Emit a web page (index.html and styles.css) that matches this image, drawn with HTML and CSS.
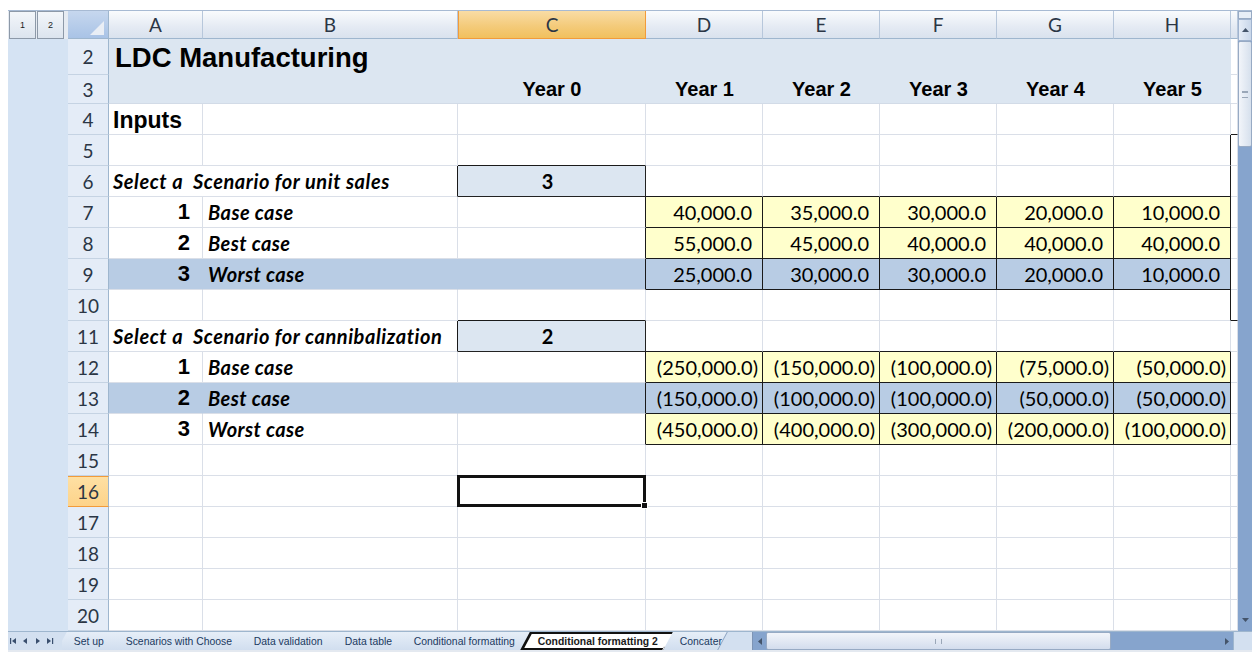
FILE: index.html
```html
<!DOCTYPE html>
<html lang="en">
<head>
<meta charset="utf-8">
<title>LDC Manufacturing - Conditional formatting 2</title>
<link rel="stylesheet" href="styles.css">
</head>
<body>
<div class="app">
  <div class="main">
    <aside class="outline">
      <div class="levels"><span class="lvl">1</span><span class="lvl">2</span></div>
    </aside>

    <section class="sheet">
      <div class="row hdr">
        <div class="corner"><svg width="41" height="29" viewBox="0 0 41 29"><polygon points="36,10 36,24 22,24" fill="#e9eef5"/></svg></div>
        <div class="ch">A</div>
        <div class="ch">B</div>
        <div class="ch active">C</div>
        <div class="ch">D</div>
        <div class="ch">E</div>
        <div class="ch">F</div>
        <div class="ch">G</div>
        <div class="ch">H</div>
        <div class="ch"></div>
      </div>

      <div class="row r2">
        <div class="rh">2</div>
        <div class="c band title span8">LDC Manufacturing</div>
        <div class="c"></div>
      </div>

      <div class="row r3">
        <div class="rh">3</div>
        <div class="c band span2"></div>
        <div class="c band year">Year 0</div>
        <div class="c band year">Year 1</div>
        <div class="c band year">Year 2</div>
        <div class="c band year">Year 3</div>
        <div class="c band year">Year 4</div>
        <div class="c band year">Year 5</div>
        <div class="c"></div>
      </div>

      <div class="row">
        <div class="rh">4</div>
        <div class="c heading">Inputs</div>
        <div class="c"></div><div class="c"></div>
        <div class="c"></div><div class="c"></div><div class="c"></div><div class="c"></div><div class="c"></div>
        <div class="c bb"></div>
      </div>

      <div class="row">
        <div class="rh">5</div>
        <div class="c"></div><div class="c"></div><div class="c bb"></div>
        <div class="c"></div><div class="c"></div><div class="c"></div><div class="c"></div><div class="c br"></div>
        <div class="c"></div>
      </div>

      <div class="row">
        <div class="rh">6</div>
        <div class="c span2 label br">Select a&nbsp; Scenario for unit sales</div>
        <div class="c pick">3</div>
        <div class="c bb"></div><div class="c bb"></div><div class="c bb"></div><div class="c bb"></div><div class="c bb br"></div>
        <div class="c"></div>
      </div>

      <div class="row">
        <div class="rh">7</div>
        <div class="c num">1</div><div class="c case">Base case</div><div class="c br"></div>
        <div class="c v">40,000.0</div><div class="c v">35,000.0</div><div class="c v">30,000.0</div><div class="c v">20,000.0</div><div class="c v">10,000.0</div>
        <div class="c"></div>
      </div>

      <div class="row">
        <div class="rh">8</div>
        <div class="c num">2</div><div class="c case">Best case</div><div class="c br"></div>
        <div class="c v">55,000.0</div><div class="c v">45,000.0</div><div class="c v">40,000.0</div><div class="c v">40,000.0</div><div class="c v">40,000.0</div>
        <div class="c"></div>
      </div>

      <div class="row">
        <div class="rh">9</div>
        <div class="c num hl">3</div><div class="c case hl">Worst case</div><div class="c hl br"></div>
        <div class="c v on">25,000.0</div><div class="c v on">30,000.0</div><div class="c v on">30,000.0</div><div class="c v on">20,000.0</div><div class="c v on">10,000.0</div>
        <div class="c"></div>
      </div>

      <div class="row">
        <div class="rh">10</div>
        <div class="c"></div><div class="c"></div><div class="c bb"></div>
        <div class="c"></div><div class="c"></div><div class="c"></div><div class="c"></div><div class="c br"></div>
        <div class="c bb"></div>
      </div>

      <div class="row">
        <div class="rh">11</div>
        <div class="c span2 label br">Select a&nbsp; Scenario for cannibalization</div>
        <div class="c pick">2</div>
        <div class="c bb"></div><div class="c bb"></div><div class="c bb"></div><div class="c bb"></div><div class="c bb"></div>
        <div class="c"></div>
      </div>

      <div class="row">
        <div class="rh">12</div>
        <div class="c num">1</div><div class="c case">Base case</div><div class="c br"></div>
        <div class="c v neg">(250,000.0)</div><div class="c v neg">(150,000.0)</div><div class="c v neg">(100,000.0)</div><div class="c v neg">(75,000.0)</div><div class="c v neg">(50,000.0)</div>
        <div class="c"></div>
      </div>

      <div class="row">
        <div class="rh">13</div>
        <div class="c num hl">2</div><div class="c case hl">Best case</div><div class="c hl br"></div>
        <div class="c v neg on">(150,000.0)</div><div class="c v neg on">(100,000.0)</div><div class="c v neg on">(100,000.0)</div><div class="c v neg on">(50,000.0)</div><div class="c v neg on">(50,000.0)</div>
        <div class="c"></div>
      </div>

      <div class="row">
        <div class="rh">14</div>
        <div class="c num">3</div><div class="c case">Worst case</div><div class="c br"></div>
        <div class="c v neg">(450,000.0)</div><div class="c v neg">(400,000.0)</div><div class="c v neg">(300,000.0)</div><div class="c v neg">(200,000.0)</div><div class="c v neg">(100,000.0)</div>
        <div class="c"></div>
      </div>

      <div class="row">
        <div class="rh">15</div>
        <div class="c"></div><div class="c"></div><div class="c"></div>
        <div class="c"></div><div class="c"></div><div class="c"></div><div class="c"></div><div class="c"></div>
        <div class="c"></div>
      </div>

      <div class="row">
        <div class="rh active">16</div>
        <div class="c"></div><div class="c"></div><div class="c current"></div>
        <div class="c"></div><div class="c"></div><div class="c"></div><div class="c"></div><div class="c"></div>
        <div class="c"></div>
      </div>

      <div class="row">
        <div class="rh">17</div>
        <div class="c"></div><div class="c"></div><div class="c"></div>
        <div class="c"></div><div class="c"></div><div class="c"></div><div class="c"></div><div class="c"></div>
        <div class="c"></div>
      </div>

      <div class="row">
        <div class="rh">18</div>
        <div class="c"></div><div class="c"></div><div class="c"></div>
        <div class="c"></div><div class="c"></div><div class="c"></div><div class="c"></div><div class="c"></div>
        <div class="c"></div>
      </div>

      <div class="row">
        <div class="rh">19</div>
        <div class="c"></div><div class="c"></div><div class="c"></div>
        <div class="c"></div><div class="c"></div><div class="c"></div><div class="c"></div><div class="c"></div>
        <div class="c"></div>
      </div>

      <div class="row">
        <div class="rh">20</div>
        <div class="c"></div><div class="c"></div><div class="c"></div>
        <div class="c"></div><div class="c"></div><div class="c"></div><div class="c"></div><div class="c"></div>
        <div class="c"></div>
      </div>
    </section>

    <div class="vscroll">
      <div class="split"></div>
      <div class="vbtn"><svg width="7" height="4" viewBox="0 0 7 4"><polygon points="0,4 3.5,0 7,4" fill="#44546a"/></svg></div>
      <div class="vthumb"><span class="grip"></span></div>
      <div class="vtrack"></div>
      <div class="vbtn down"><svg width="7" height="4" viewBox="0 0 7 4"><polygon points="0,0 7,0 3.5,4" fill="#44546a"/></svg></div>
    </div>
  </div>

  <footer class="tabbar">
    <div class="nav">
      <svg width="48" height="10" viewBox="0 0 48 10">
        <rect x="2" y="2" width="1.2" height="6" fill="#3a4f6e"/>
        <polygon points="8,2 8,8 4,5" fill="#3a4f6e"/>
        <polygon points="19,2 19,8 15,5" fill="#3a4f6e"/>
        <polygon points="28,2 28,8 32,5" fill="#3a4f6e"/>
        <polygon points="39,2 39,8 43,5" fill="#3a4f6e"/>
        <rect x="44" y="2" width="1.2" height="6" fill="#3a4f6e"/>
      </svg>
    </div>
    <div class="tabs">
      <div class="tab first"><span>Set up</span></div>
      <div class="tab"><span>Scenarios with Choose</span></div>
      <div class="tab"><span>Data validation</span></div>
      <div class="tab"><span>Data table</span></div>
      <div class="tab"><span>Conditional formatting</span></div>
      <div class="tab current"><span>Conditional formatting 2</span></div>
      <div class="tab cut"><span>Concater</span></div>
    </div>
    <div class="hscroll">
      <div class="hbtn"><svg width="4" height="7" viewBox="0 0 4 7"><polygon points="4,0 4,7 0,3.5" fill="#44546a"/></svg></div>
      <div class="hthumb"><span class="hgrip"></span></div>
      <div class="htrack"></div>
      <div class="hbtn"><svg width="4" height="7" viewBox="0 0 4 7"><polygon points="0,0 0,7 4,3.5" fill="#44546a"/></svg></div>
    </div>
    <div class="corner-box"></div>
  </footer>
</div>
</body>
</html>
```

FILE: styles.css
```css
html, body {
  margin: 0;
  padding: 0;
  background: #ffffff;
}

.app {
  width: 1244px;
  height: 642px;
  margin: 10px 0 0 8px;
  display: flex;
  flex-direction: column;
  border-top: 1px solid #a7bad3;
  font-family: "Lato", "Open Sans", sans-serif;
  color: #000;
}

.main {
  display: flex;
  height: 620px;
  overflow: hidden;
}

/* outline (grouping) gutter on the left */
.outline {
  width: 60px;
  flex: none;
  background: #d5e3f3;
}
.levels {
  height: 28px;
  display: flex;
  gap: 1px;
  padding: 0 1px;
  background: #e6ebf2;
}
.lvl {
  width: 25px;
  height: 26px;
  border: 1px solid #8d99a8;
  background: linear-gradient(#f3f6fa, #dce4ee);
  font: 9px "Liberation Sans", Arial, sans-serif;
  color: #1b1b1b;
  display: flex;
  align-items: center;
  justify-content: center;
}

/* worksheet grid */
.sheet {
  width: 1170px;
  flex: none;
}
.row {
  display: grid;
  grid-template-columns: 41px 94px 255px 188px repeat(5, 117px) 7px;
  height: 31px;
}
.row.hdr { height: 28px; }
.row.r2 { height: 36px; }
.row.r3 { height: 29px; }

.corner {
  background: linear-gradient(#c6d7ee, #a9c3e6);
  border-right: 1px solid #9eb6ce;
  border-bottom: 1px solid #9eb6ce;
  overflow: hidden;
}
.corner svg { display: block; }

.ch {
  background: linear-gradient(#f9fbfd, #e4eaf3 60%, #d9e2ee);
  border-right: 1px solid #b7c7db;
  border-bottom: 1px solid #9eb6ce;
  display: flex;
  align-items: center;
  justify-content: center;
  font-size: 19px;
  color: #2b3645;
}
.ch.active {
  background: linear-gradient(#f9dca5, #f4cb7b 55%, #f1c05e);
  border: 1px solid #f29b3a;
  border-top: none;
}

.rh {
  background: #e4ecf7;
  border-right: 1px solid #9eb6ce;
  border-bottom: 1px solid #c5d3e3;
  display: flex;
  align-items: center;
  justify-content: center;
  font-size: 19px;
  color: #2b3645;
}
.rh.active {
  background: linear-gradient(#fee0a3, #fdd38a);
  border-bottom-color: #f29b3a;
  border-top: 1px solid #f29b3a;
}

.c {
  border-right: 1px solid #dadfe8;
  border-bottom: 1px solid #dadfe8;
  display: flex;
  align-items: center;
  white-space: nowrap;
  overflow: visible;
  min-width: 0;
}
.span2 { grid-column: span 2; }
.span8 { grid-column: span 8; }

.band {
  background: #dce6f1;
  border-right: none;
  border-bottom: none;
}
.r3 .band { border-bottom: 1px solid #d2dbe7; }

.title {
  font: bold 27.5px "Liberation Sans", Arial, sans-serif;
  padding-left: 6px;
  padding-top: 1px;
}
.year {
  justify-content: center;
  font: bold 20px "Liberation Sans", Arial, sans-serif;
  padding-top: 1px;
}
.heading {
  font: bold 23px "Liberation Sans", Arial, sans-serif;
  padding-left: 4px;
  padding-top: 2px;
}
.label {
  font-weight: bold;
  font-style: italic;
  font-size: 20px;
  letter-spacing: 0.55px;
  padding-left: 4px;
}
.case {
  font-weight: bold;
  font-style: italic;
  font-size: 20px;
  letter-spacing: 0.4px;
  padding-left: 5px;
}
.num {
  justify-content: flex-end;
  padding-right: 12px;
  font: bold 22px "Liberation Sans", Arial, sans-serif;
}
.pick {
  background: #dce6f1;
  border-right: 1px solid #222;
  border-bottom: 1px solid #222;
  justify-content: center;
  padding-right: 8px;
  font-weight: bold;
  font-size: 20px;
}
.v {
  background: #ffffcc;
  border-right: 1px solid #1a1a1a;
  border-bottom: 1px solid #1a1a1a;
  justify-content: flex-end;
  padding-right: 10px;
  font-size: 20px;
}
.v.neg { padding-right: 4px; }
.hl, .v.on { background: #b8cce4; }
.hl { border-right-color: transparent; }
.hl.br { border-right-color: #1a1a1a; }

.bb { border-bottom-color: #1a1a1a; }
.br { border-right-color: #1a1a1a; }

/* active cell with its fill handle */
.current { position: relative; }
.current::after {
  content: "";
  position: absolute;
  left: -1px;
  top: -1px;
  right: -1px;
  bottom: -1px;
  border: 3px solid #111;
}
.current::before {
  content: "";
  position: absolute;
  right: -3px;
  bottom: -3px;
  width: 5px;
  height: 5px;
  background: #111;
  border: 1px solid #fff;
  z-index: 1;
}

/* vertical scrollbar */
.vscroll {
  width: 14px;
  flex: none;
  display: flex;
  flex-direction: column;
  background: #86a4cd;
}
.split {
  height: 6px;
  background: #e7eef7;
  border: 1px solid #97aac4;
}
.vbtn {
  height: 20px;
  background: linear-gradient(90deg, #e6edf7, #c9d7ea);
  border: 1px solid #9fb3cf;
  display: flex;
  align-items: center;
  justify-content: center;
}
.vbtn.down {
  background: #86a4cd;
  border-color: #86a4cd;
}
.vthumb {
  height: 104px;
  background: linear-gradient(90deg, #f2f5fa, #d6e0ed);
  border: 1px solid #97aac4;
  border-radius: 2px;
  display: flex;
  align-items: center;
  justify-content: center;
}
.grip {
  width: 6px;
  height: 5px;
  border-top: 1px solid #9aa7b8;
  border-bottom: 1px solid #9aa7b8;
  box-shadow: inset 0 2px 0 -1px #9aa7b8;
}
.vtrack { flex: 1; }

/* sheet tabs and horizontal scrollbar */
.tabbar {
  height: 18px;
  display: flex;
  align-items: stretch;
  background: #d3e0f0;
  border-top: 1px solid #9eb6ce;
  border-bottom: 3px solid #e4e9f0;
  font: 10.4px "Liberation Sans", Arial, sans-serif;
  color: #20395f;
}
.nav {
  width: 54px;
  flex: none;
  display: flex;
  align-items: center;
}
.nav svg { display: block; }
.tabs {
  display: flex;
  width: 690px;
  overflow: hidden;
}
.tab {
  display: flex;
  align-items: center;
  padding: 0 13px 0 12px;
  background: linear-gradient(#e6eef8, #d1deef);
  border-right: 1px solid #8ea4c2;
  transform: skewX(-28deg);
  margin-left: -4px;
}
.tab > span {
  display: block;
  transform: skewX(28deg);
}
.tab.first { margin-left: 0; }
.tab.current {
  background: #ffffff;
  color: #1a1a1a;
  font-weight: bold;
}
.tab.cut { padding-right: 0; }

.hscroll {
  width: 480px;
  flex: none;
  display: flex;
  align-items: stretch;
  background: #86a4cd;
  border-left: 1px solid #7d94b5;
}
.hbtn {
  width: 13px;
  display: flex;
  align-items: center;
  justify-content: center;
}
.hthumb {
  width: 343px;
  background: linear-gradient(#f2f5fa, #d3dded);
  border: 1px solid #97aac4;
  border-radius: 2px;
  display: flex;
  align-items: center;
  justify-content: center;
}
.hgrip {
  width: 5px;
  height: 5px;
  border-left: 1px solid #9aa7b8;
  border-right: 1px solid #9aa7b8;
}
.htrack { flex: 1; }
.corner-box {
  flex: 1;
  background: #d3e0f0;
  border-left: 1px solid #9eb6ce;
}
```
